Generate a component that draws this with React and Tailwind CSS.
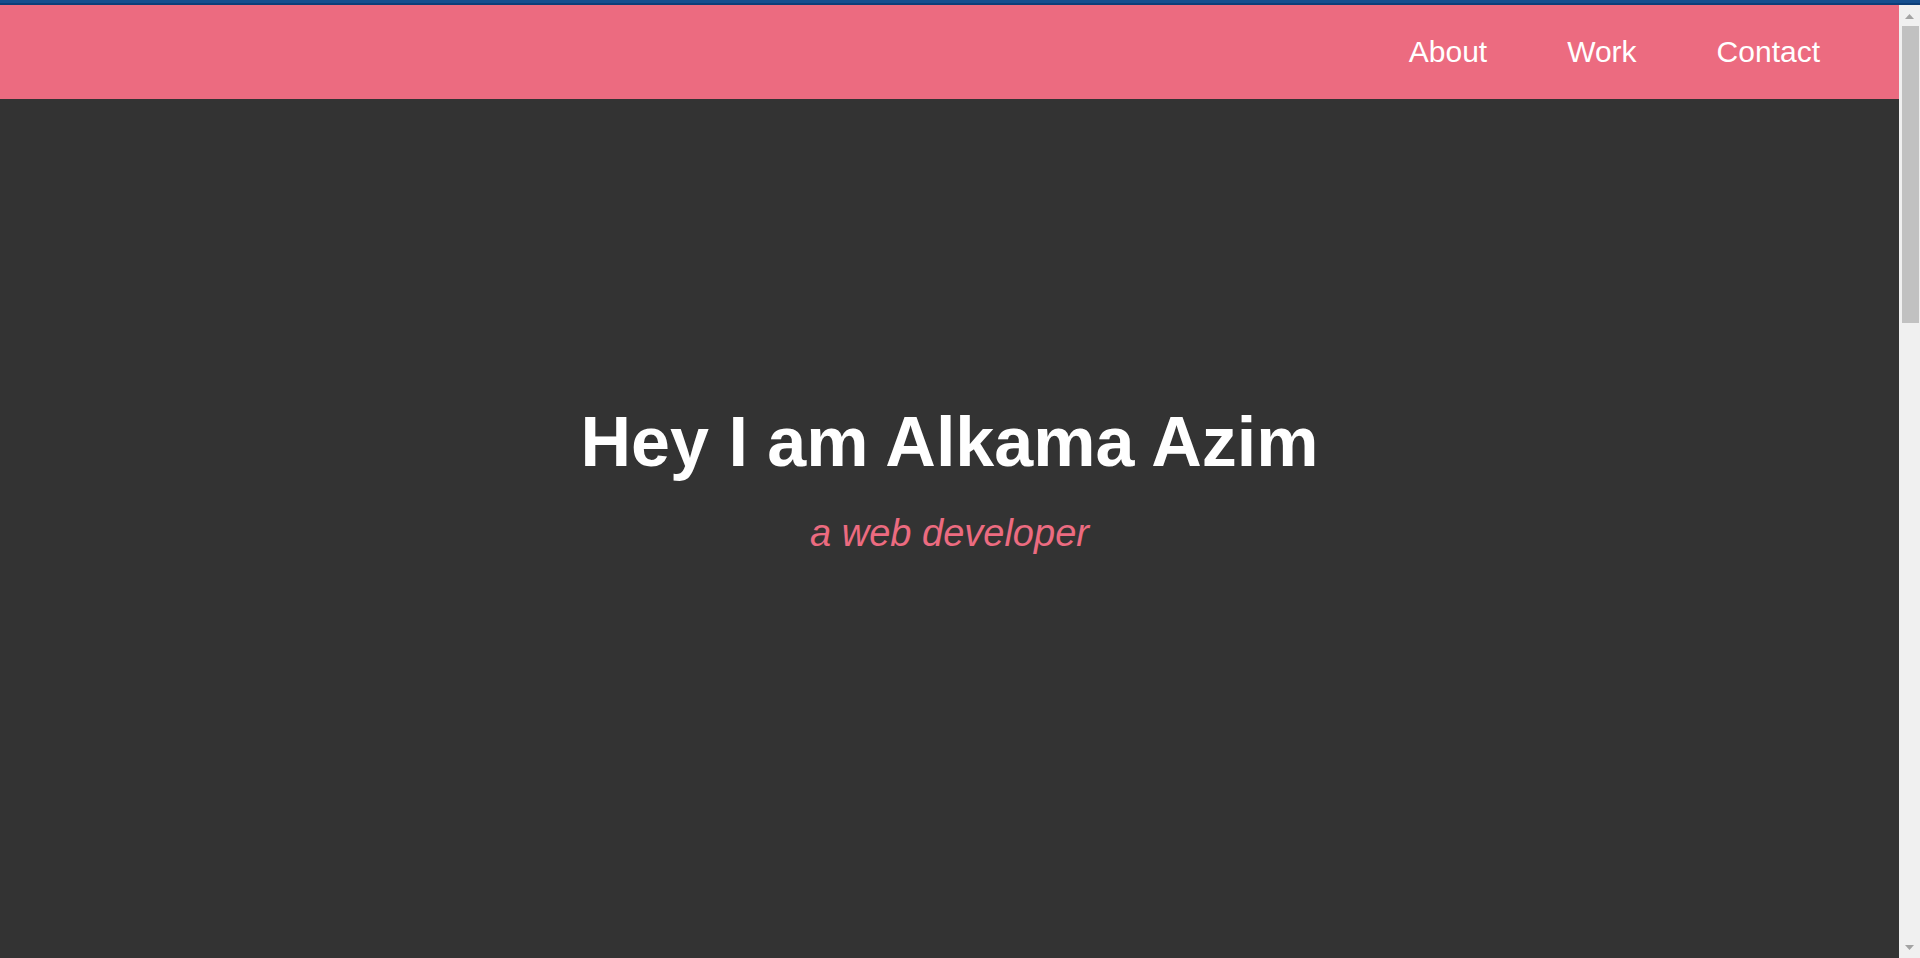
export default function App() {
  return (
    <div className="w-[1920px] h-[958px] overflow-hidden flex flex-col bg-[#333333]" style={{ fontFamily: '"Liberation Sans", Arial, sans-serif' }}>
      <div className="h-[3px] bg-[#154e8e] shrink-0" />
      <div className="h-[2px] bg-[#0c3e78] shrink-0" />
      <div className="flex flex-1 min-h-0">
        <div className="w-[1899px] flex flex-col">
          <nav className="h-[94px] bg-[#ec6b80] flex items-center justify-end pr-[79px]">
            <ul className="flex items-center gap-[80px] text-[30px] text-white leading-[34px]">
              <li>About</li>
              <li>Work</li>
              <li>Contact</li>
            </ul>
          </nav>
          <main className="flex-1 flex flex-col items-center pt-[303px]">
            <h1 className="text-[70px] font-bold text-white leading-[80px]">Hey I am Alkama Azim</h1>
            <p className="mt-[30px] text-[38px] italic text-[#ec6b80] leading-[42px]">a web developer</p>
          </main>
        </div>
        <div className="w-[21px] bg-[#f0f0f0] flex flex-col items-center pt-[9px] pb-[8px]">
          <svg width="9" height="5" viewBox="0 0 9 5" className="ml-[-1px]">
            <polygon points="4.5,0 9,5 0,5" fill="#a3a3a3" />
          </svg>
          <div className="mt-[7px] ml-[1px] w-[17px] h-[297px] bg-[#c1c1c1]" />
          <div className="flex-1" />
          <svg width="9" height="5" viewBox="0 0 9 5" className="ml-[-1px]">
            <polygon points="0,0 9,0 4.5,5" fill="#a3a3a3" />
          </svg>
        </div>
      </div>
    </div>
  );
}
